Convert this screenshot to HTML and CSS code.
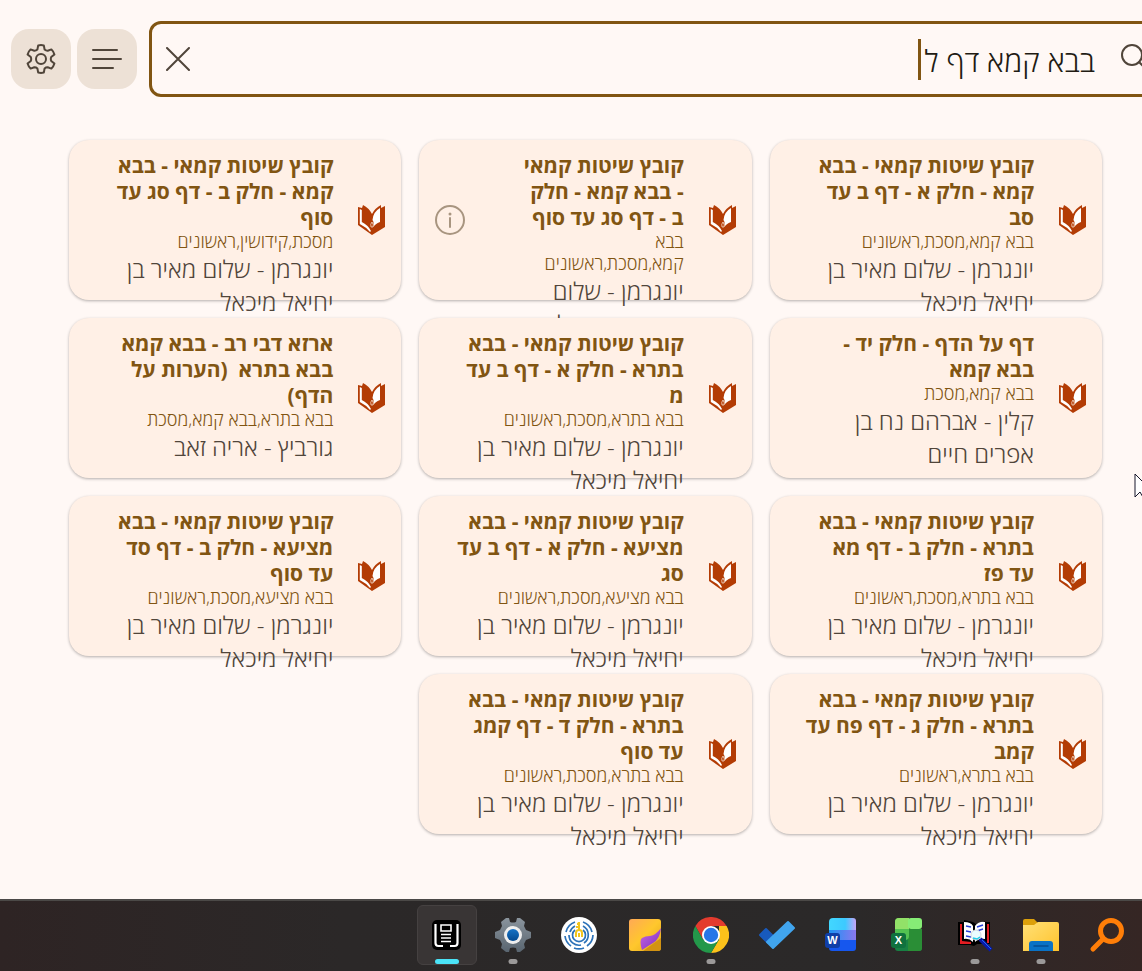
FILE: index.html
```
<!DOCTYPE html>
<html lang="he" dir="rtl">
<head>
<meta charset="utf-8">
<title>בבא קמא דף ל</title>
<link rel="stylesheet" href="styles.css">
</head>
<body>
<svg class="defs" aria-hidden="true">
  <symbol id="book" viewBox="0 0 28 30">
    <path fill="#b33c05" d="M0 2 4 3 5 0Q11 3 14 9 17 3 23 0V3L27 1V22L14 30 0 20z"/>
    <path fill="#fff" d="M1.800 4 3.800 5V17Q10 20 13 26L12 27Q8 22 1.800 19z"/>
    <path fill="#fff" d="M22 3V17Q17 19 15.500 22V17L14.500 15Q15 7 22 3z"/>
    <path fill="#b33c05" stroke="#ffefe3" stroke-width=".7" d="M14 17q2 3 1 5h-2q-1-3 1-5z"/>
  </symbol>
</svg>
<main class="app">
  <header class="toolbar">
    <button class="tool" aria-label="הגדרות"><svg width="30" height="30" viewBox="0 0 30 30"><path d="M11.4 5.5 12.2 1.4Q15 .8 17.8 1.4L18.6 5.5Q20 6.8 21.7 6.7L25.4 5.4Q27.6 7.5 28.4 10.4L25.2 13.1Q24.4 15 25.2 16.9L28.4 19.6Q27.6 22.5 25.4 24.6L21.7 23.3Q20 23.2 18.6 24.5L17.8 28.6Q15 29.2 12.2 28.6L11.4 24.5Q10 23.2 8.3 23.3L4.6 24.6Q2.4 22.5 1.6 19.6L4.8 16.9Q5.6 15 4.8 13.1L1.6 10.4Q2.4 7.5 4.6 5.4L8.3 6.7Q10 6.8 11.4 5.5z"/><circle cx="15" cy="15" r="5"/></svg></button>
    <button class="tool" aria-label="תפריט"><svg width="32" height="24" viewBox="0 0 32 24"><path d="M2 3h24M2 12h28M2 21h20"/></svg></button>
    <div class="search">
      <button class="clear" aria-label="ניקוי"><svg width="24" height="24" viewBox="0 0 24 24"><path d="m1 1 22 22M23 1 1 23"/></svg></button>
      <input class="query" dir="rtl" type="text" aria-label="חיפוש" value="בבא קמא דף ל">
      <span class="caret"></span>
      <svg class="lens" width="32" height="32" viewBox="0 0 32 32"><circle cx="12" cy="12" r="10"/><path d="m19 19 10 10"/></svg>
    </div>
  </header>
  <section class="grid">
    <article class="card"><svg class="book"><use href="#book"/></svg><div class="info"><h2>קובץ שיטות קמאי - בבא<br>קמא - חלק א - דף ב עד<br>סב</h2><p class="tags">בבא קמא,מסכת,ראשונים</p><p class="author">יונגרמן - שלום מאיר בן<br>יחיאל מיכאל</p></div></article>
    <article class="card"><svg class="book"><use href="#book"/></svg><div class="info"><h2>קובץ שיטות קמאי<br>- בבא קמא - חלק<br>ב - דף סג עד סוף</h2><p class="tags">בבא<br>קמא,מסכת,ראשונים</p><p class="author">יונגרמן - שלום<br>מאיר בן יחיאל</p></div><button class="about" aria-label="מידע"><svg width="30" height="30" viewBox="0 0 30 30"><circle cx="15" cy="15" r="14"/><path d="M15 13v9"/><circle class="dot" cx="15" cy="9" r="1.5"/></svg></button></article>
    <article class="card"><svg class="book"><use href="#book"/></svg><div class="info"><h2>קובץ שיטות קמאי - בבא<br>קמא - חלק ב - דף סג עד<br>סוף</h2><p class="tags">מסכת,קידושין,ראשונים</p><p class="author">יונגרמן - שלום מאיר בן<br>יחיאל מיכאל</p></div></article>
    <article class="card"><svg class="book"><use href="#book"/></svg><div class="info"><h2>דף על הדף - חלק יד -<br>בבא קמא</h2><p class="tags">בבא קמא,מסכת</p><p class="author">קלין - אברהם נח בן<br>אפרים חיים</p></div></article>
    <article class="card"><svg class="book"><use href="#book"/></svg><div class="info"><h2>קובץ שיטות קמאי - בבא<br>בתרא - חלק א - דף ב עד<br>מ</h2><p class="tags">בבא בתרא,מסכת,ראשונים</p><p class="author">יונגרמן - שלום מאיר בן<br>יחיאל מיכאל</p></div></article>
    <article class="card"><svg class="book"><use href="#book"/></svg><div class="info"><h2>ארזא דבי רב - בבא קמא<br>בבא בתרא&nbsp; (הערות על<br>הדף)</h2><p class="tags">בבא בתרא,בבא קמא,מסכת</p><p class="author">גורביץ - אריה זאב</p></div></article>
    <article class="card"><svg class="book"><use href="#book"/></svg><div class="info"><h2>קובץ שיטות קמאי - בבא<br>בתרא - חלק ב - דף מא<br>עד פז</h2><p class="tags">בבא בתרא,מסכת,ראשונים</p><p class="author">יונגרמן - שלום מאיר בן<br>יחיאל מיכאל</p></div></article>
    <article class="card"><svg class="book"><use href="#book"/></svg><div class="info"><h2>קובץ שיטות קמאי - בבא<br>מציעא - חלק א - דף ב עד<br>סג</h2><p class="tags">בבא מציעא,מסכת,ראשונים</p><p class="author">יונגרמן - שלום מאיר בן<br>יחיאל מיכאל</p></div></article>
    <article class="card"><svg class="book"><use href="#book"/></svg><div class="info"><h2>קובץ שיטות קמאי - בבא<br>מציעא - חלק ב - דף סד<br>עד סוף</h2><p class="tags">בבא מציעא,מסכת,ראשונים</p><p class="author">יונגרמן - שלום מאיר בן<br>יחיאל מיכאל</p></div></article>
    <article class="card"><svg class="book"><use href="#book"/></svg><div class="info"><h2>קובץ שיטות קמאי - בבא<br>בתרא - חלק ג - דף פח עד<br>קמב</h2><p class="tags">בבא בתרא,ראשונים</p><p class="author">יונגרמן - שלום מאיר בן<br>יחיאל מיכאל</p></div></article>
    <article class="card"><svg class="book"><use href="#book"/></svg><div class="info"><h2>קובץ שיטות קמאי - בבא<br>בתרא - חלק ד - דף קמג<br>עד סוף</h2><p class="tags">בבא בתרא,מסכת,ראשונים</p><p class="author">יונגרמן - שלום מאיר בן<br>יחיאל מיכאל</p></div></article>
  </section>
</main>
<nav class="taskbar" dir="ltr">
  <button class="task active" aria-label="ספרייה"><svg viewBox="0 0 36 36"><rect x="3" y="3" width="29" height="30" rx="5" fill="#000"/><path d="M6.500 7v19q0 3 3 3h4.500M28.500 7v19q0 3-3 3H21" fill="none" stroke="#fff" stroke-width="2.2"/><path d="M12 8h10v6H12zM12 17.500h10M12 21h10M12 24.500h10" fill="none" stroke="#fff" stroke-width="1.6"/></svg></button>
  <button class="task running" aria-label="הגדרות"><svg viewBox="0 0 36 36"><defs><linearGradient id="gearfill" x2="0" y2="1"><stop stop-color="#8a949d"/><stop offset="1" stop-color="#596570"/></linearGradient><linearGradient id="bluefill" x2="0" y2="1"><stop stop-color="#1673c6"/><stop offset="1" stop-color="#034a91"/></linearGradient></defs><path fill="url(#gearfill)" d="M11 1h3l1 4q3 1 6 0l1-4h3l5 4-1 4 2 4 5 2v6l-5 2-2 4 1 4-5 4h-3l-1-4q-3-1-6 0l-1 4h-3l-5-4 1-4-2-4-5-2v-6l5-2 2-4-1-4z"/><circle cx="18" cy="18" r="9" fill="#eee"/><circle cx="18" cy="18" r="6" fill="url(#bluefill)"/></svg></button>
  <button class="task" aria-label="אוצר"><svg viewBox="0 0 36 36"><circle cx="18" cy="18" r="18" fill="#fff"/><g fill="none" stroke="#2c72b9" stroke-width="1.7"><path d="M22 5a14 14 0 0 1 9 10M32 18a14 14 0 0 1-6 11M23 31a14 14 0 0 1-10 0M10 29A14 14 0 0 1 4 19M5 15a14 14 0 0 1 9-10"/><path d="M22 9a10 10 0 0 1 1 17M20 28A10 10 0 0 1 8 18M9 15a10 10 0 0 1 5-6"/><path d="M22 13a6.500 6.500 0 1 1-8 0"/></g><path d="M16 7q2 0 2-2v8M15 10h3M15 20v-4q0-3 3-3t3 3v4M18 16v4" fill="none" stroke="#f2c51d" stroke-width="2"/></svg></button>
  <button class="task" aria-label="פתקים"><svg viewBox="0 0 36 36"><defs><linearGradient id="notefill" x2="1" y2="1"><stop stop-color="#ffa956"/><stop offset=".5" stop-color="#ffc72d"/><stop offset="1" stop-color="#e0a51a"/></linearGradient><linearGradient id="curlfill" x2="1" y2="1"><stop stop-color="#ca66e3"/><stop offset="1" stop-color="#7b31be"/></linearGradient></defs><rect x="2" y="2" width="32" height="32" rx="3" fill="url(#notefill)"/><path fill="#d29312" d="m16 34 18-13v10q0 3-3 3z"/><path fill="url(#curlfill)" d="M15 33q-3-10 0-12 3-2 8-2 6-1 11-8-1 11-8 15-5 3-11 7z"/></svg></button>
  <button class="task running" aria-label="Chrome"><svg viewBox="0 0 36 36"><path fill="#e33b2e" d="M2.400 9A18 18 0 0 1 33.600 9H18L10 22.500z"/><path fill="#fcc21b" d="M33.600 9A18 18 0 0 1 18 36l8-13.500V9z"/><path fill="#23984a" d="M2.400 9A18 18 0 0 0 18 36l8-13.500-16 0z"/><circle cx="18" cy="18" r="9" fill="#fff"/><circle cx="18" cy="18" r="7.200" fill="#2876e8"/></svg></button>
  <button class="task" aria-label="To Do"><svg viewBox="0 0 36 36"><path fill="#185abd" stroke="#185abd" stroke-width="2" stroke-linejoin="round" d="m1 18 6-6 8 8-6 6z"/><path fill="#41a5ee" stroke="#41a5ee" stroke-width="2" stroke-linejoin="round" d="M8 25 29 5l6 6-21 20z"/></svg></button>
  <button class="task" aria-label="Word"><svg viewBox="2 0 36 36"><defs><linearGradient id="wordtop"><stop stop-color="#42d7ff"/><stop offset=".6" stop-color="#3ccaff"/><stop offset="1" stop-color="#c4a5f7"/></linearGradient><linearGradient id="wordmid"><stop stop-color="#1b93f5"/><stop offset="1" stop-color="#8a78ee"/></linearGradient></defs><rect x="6" y="10" width="27" height="24" rx="3" fill="#1657ee"/><path fill="url(#wordmid)" d="M6 8h27v15H6z"/><path fill="url(#wordtop)" d="M10 1h20q3 0 3 3v9H6V5q0-4 4-4z"/><rect x="2" y="16" width="15" height="15" rx="3" fill="#103fa8"/><text x="9.500" y="27" class="letter">W</text></svg></button>
  <button class="task" aria-label="Excel"><svg viewBox="2 0 36 36"><rect x="6" y="12" width="27" height="22" rx="3" fill="#188044"/><path fill="#2a8e36" d="M19 12h14v19q0 3-3 3H19z"/><path fill="#53c251" d="M10 1h10v18q0 4-4 4H6V5q0-4 4-4z"/><path fill="#92e168" d="M10 1h10v11H6V5q0-4 4-4z"/><rect x="19" y="1" width="14" height="11" rx="3" fill="#86ed76"/><rect x="2" y="16" width="15" height="15" rx="3" fill="#10713e"/><text x="9.500" y="27" class="letter">X</text></svg></button>
  <button class="task running" aria-label="חיפוש בספרים"><svg viewBox="0 0 36 36"><path fill="#000" d="M1 5h6V3l9 2 3 2 8-3 2 1h4v22H20l-3 2-4-1H1z"/><path fill="#e31d22" d="M3 7h2v17l9 1v2H3zM30 7h2v19h-2z"/><path fill="#fff" d="M7 5q7 0 9 4v16q-4-4-9-3zM18 9q4-5 10-4v17q-6-1-10 3z"/><path d="m9 9 5 1m-5 4 5 1m-5 4 5 1M20 10l6-2m-6 6 6-2" stroke="#2840d8" stroke-width="1.400"/><circle cx="19" cy="18" r="5" fill="#eafcff" stroke="#d5dadd" stroke-width="1"/><path d="m16 21 4 1 3-2" fill="none" stroke="#20cbe8" stroke-width="1.500"/><path d="m23 22 11 11" stroke="#0719a9" stroke-width="4"/><path d="m25 23 9 9" stroke="#2268f1" stroke-width="1"/></svg></button>
  <button class="task running" aria-label="סייר הקבצים"><svg viewBox="0 0 36 36"><defs><linearGradient id="folderfill" x2="1" y2="1"><stop stop-color="#ffe077"/><stop offset="1" stop-color="#ffc32c"/></linearGradient></defs><path fill="#dca00b" d="M0 4q0-2 2-2h9l4 4v5H0z"/><path fill="url(#folderfill)" d="M0 8h11l4-3h19q2 0 2 2v27H0z"/><path fill="#0a72c5" d="M6 34V27q0-3 3-3h18q3 0 3 3v7z"/><path d="M11 29h14" stroke="#064e91" stroke-width="1.500" stroke-linecap="round"/></svg></button>
  <button class="task" aria-label="חיפוש"><svg viewBox="0 0 36 36"><path d="m4 32 9-9" stroke="#ff7e08" stroke-width="5" stroke-linecap="round"/><circle cx="22" cy="14" r="10.500" fill="none" stroke="#ff7e08" stroke-width="5"/></svg></button>
</nav>
<svg class="pointer" width="18" height="26" viewBox="0 0 18 26" aria-hidden="true"><path d="M1 1v23l5-5 4 7 3-2-3-7h7z"/></svg>
</body>
</html>
```
FILE: styles.css
```
* { box-sizing: border-box; }
body { margin: 0; min-height: 100vh; display: flex; flex-direction: column; position: relative; overflow: hidden; background: #fff8f5; font-family: "Open Sans", "Noto Sans", sans-serif; }
button { border: 0; padding: 0; background: none; }
.defs { position: absolute; width: 0; height: 0; }
.app { flex: 1; }
.toolbar { direction: ltr; display: flex; align-items: center; gap: 6px; padding: 21px 0 0 11px; }
.tool { display: grid; place-items: center; width: 60px; height: 60px; border-radius: 18px; background: #ede1d6; }
.tool svg, .clear svg, .lens { fill: none; stroke: #50453a; stroke-width: 2; stroke-linecap: round; stroke-linejoin: round; }
.search { position: relative; flex: 1; display: flex; align-items: center; height: 76px; margin: 0 -40px 0 6px; padding: 0 27px 0 14px; border: 3px solid #815512; border-radius: 12px; }
.clear { display: grid; }
.query { flex: 1; min-width: 0; height: 60px; margin-right: 25px; padding: 2px 0 0; border: 0; outline: 0; background: none; color: #211b13; font-family: inherit; font-size: 30px; font-weight: 300; }
.caret { position: absolute; right: 258px; top: 15px; width: 3px; height: 41px; background: #815512; }
.grid { display: grid; grid-template-columns: repeat(3, 1fr); grid-auto-rows: 160px; gap: 18px; padding: 43px 40px 64px 69px; }
.card { position: relative; display: flex; align-items: center; padding: 0 15px 0 16px; border-radius: 20px; background: #fff0e6; box-shadow: 0 1px 3px #0000004d; }
.book { flex: none; width: 28px; height: 30px; }
.info { flex: 1; align-self: flex-start; margin-right: 25px; padding-top: 12px; white-space: nowrap; }
h2, p { margin: 0; }
h2 { color: #815512; font-size: 21px; line-height: 26px; font-weight: 700; }
.tags { color: #815512; font-size: 18px; line-height: 22px; font-weight: 300; }
.author { color: #50453a; font-size: 24px; line-height: 33px; font-weight: 300; }
.about { display: grid; }
.about svg { fill: none; stroke: #a89580; stroke-width: 2; stroke-linecap: round; }
.about .dot { fill: #a89580; stroke: none; }
.taskbar { display: flex; justify-content: flex-end; align-items: flex-start; gap: 6px; height: 72px; padding: 4px 5px 0; border-top: 2px solid #4b4947; background: linear-gradient(90deg, #2e2424, #2b2828 30%, #2b2929 75%, #352624); }
.task { position: relative; display: grid; place-items: center; flex: none; width: 60px; height: 60px; border-radius: 6px; }
.task svg { width: 36px; height: 36px; }
.active { background: #393535; border: 1px solid #454141; }
.active::after, .running::after { content: ""; position: absolute; bottom: 1px; left: 50%; width: 9px; height: 5px; border-radius: 3px; background: #9b9999; transform: translateX(-50%); }
.active::after { bottom: 0; width: 24px; background: #4be3f7; }
.letter { fill: #fff; font-size: 11px; font-weight: 700; text-anchor: middle; }
.pointer { position: absolute; top: 473px; right: -10px; fill: #fff; stroke: #16162a; stroke-width: 1; }
```
